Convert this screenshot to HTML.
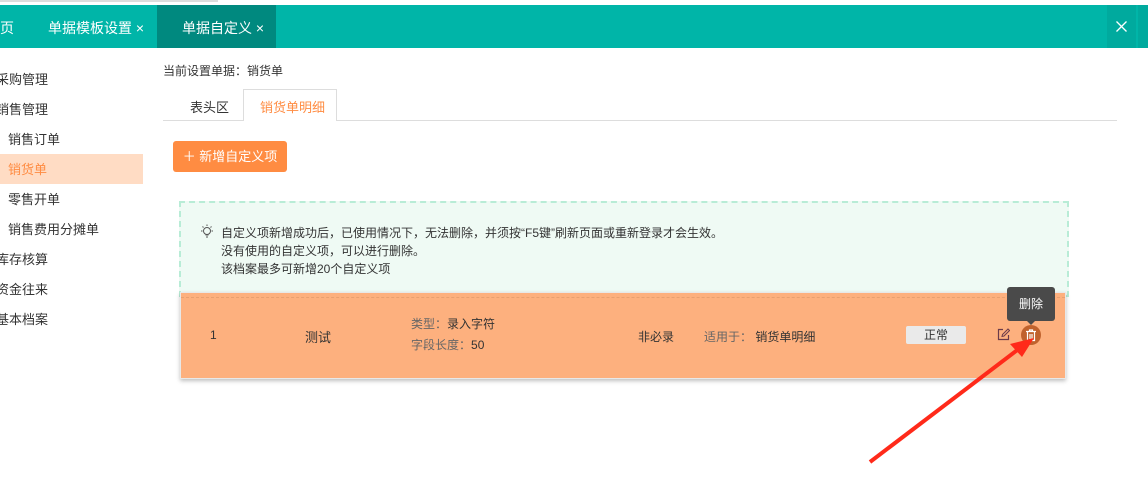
<!DOCTYPE html>
<html><head><meta charset="utf-8"><style>
*{margin:0;padding:0;box-sizing:border-box}
body{width:1148px;height:493px;background:#fff;position:relative;overflow:hidden;font-family:"Liberation Sans","Noto Sans CJK SC",sans-serif;font-size:12px;color:#333}
.a{position:absolute;white-space:nowrap}
</style></head><body>
<div class="a" style="left:0;top:0;width:218px;height:2px;background:#ddd"></div>
<div class="a" style="left:0;top:5px;width:1148px;height:43px;background:#00b5a8"></div>
<div class="a" style="left:157px;top:5px;width:119px;height:43px;background:#00897f"></div>
<div class="a" style="left:1107px;top:5px;width:29px;height:43px;background:#00aa9e"></div>
<div class="a" style="left:1138px;top:5px;width:10px;height:43px;background:#00aa9e"></div>
<div class="a" style="left:0;top:18px;color:#fff;font-size:14px">页</div>
<div class="a" style="left:48px;top:18px;color:#fff;font-size:14px">单据模板设置 ×</div>
<div class="a" style="left:182px;top:18px;color:#fff;font-size:14px">单据自定义 ×</div>
<svg class="a" style="left:1116px;top:21px" width="11" height="11"><path d="M0.5 0.5L10.5 10.5M10.5 0.5L0.5 10.5" stroke="#fff" stroke-width="1.3"/></svg>
<div class="a" style="left:0;top:154px;width:143px;height:30px;background:#ffdcc4"></div>
<div class="a" style="left:-4px;top:69px;font-size:13px">采购管理</div>
<div class="a" style="left:-4px;top:99px;font-size:13px">销售管理</div>
<div class="a" style="left:8px;top:129px;font-size:13px">销售订单</div>
<div class="a" style="left:8px;top:159px;font-size:13px;color:#ff8c42">销货单</div>
<div class="a" style="left:8px;top:189px;font-size:13px">零售开单</div>
<div class="a" style="left:8px;top:219px;font-size:13px">销售费用分摊单</div>
<div class="a" style="left:-4px;top:249px;font-size:13px">库存核算</div>
<div class="a" style="left:-4px;top:279px;font-size:13px">资金往来</div>
<div class="a" style="left:-4px;top:309px;font-size:13px">基本档案</div>
<div class="a" style="left:163px;top:62px">当前设置单据：销货单</div>
<div class="a" style="left:163px;top:120px;width:954px;height:1px;background:#ddd"></div>
<div class="a" style="left:243px;top:89px;width:94px;height:32px;border:1px solid #ddd;border-bottom:none;background:#fff"></div>
<div class="a" style="left:190px;top:97px;font-size:13px">表头区</div>
<div class="a" style="left:260px;top:97px;font-size:13px;color:#ff8c42">销货单明细</div>
<div class="a" style="left:173px;top:141px;width:114px;height:31px;background:#ff8c42;border-radius:3px;color:#fff;font-size:13px;line-height:31px;text-align:center">＋ 新增自定义项</div>
<div class="a" style="left:179px;top:201px;width:890px;height:96px;border:2px dashed #b8ecd6;background:#effaf4"></div>
<svg class="a" style="left:200px;top:224px" width="14" height="16"><circle cx="7" cy="7" r="3.5" fill="none" stroke="#555" stroke-width="1"/><path d="M5.5 11h3M6 13h2M7 0.5v1.5M1 7h1.5M11.5 7H13M2.5 2.5l1 1M11.5 2.5l-1 1" stroke="#555" stroke-width="1"/></svg>
<div class="a" style="left:221px;top:224px;line-height:18px;color:#333">自定义项新增成功后，已使用情况下，无法删除，并须按“F5键”刷新页面或重新登录才会生效。<br>没有使用的自定义项，可以进行删除。<br>该档案最多可新增20个自定义项</div>
<div class="a" style="left:180px;top:292px;width:886px;height:87px;background:#fdb07e;box-shadow:0 2px 4px rgba(0,0,0,.25);border:1px solid #e8e8e8"></div>
<div class="a" style="left:181px;top:297px;width:884px;border-top:1px dashed #e8a070"></div>
<div class="a" style="left:210px;top:328px">1</div>
<div class="a" style="left:305px;top:327px;font-size:13px">测试</div>
<div class="a" style="left:411px;top:314px;line-height:21px"><span style="color:#666">类型：</span>录入字符<br><span style="color:#666">字段长度：</span>50</div>
<div class="a" style="left:638px;top:328px">非必录</div>
<div class="a" style="left:704px;top:328px"><span style="color:#666">适用于：</span> 销货单明细</div>
<div class="a" style="left:906px;top:326px;width:60px;height:18px;background:#eaeaea;border-radius:2px;text-align:center;line-height:18px">正常</div>
<svg class="a" style="left:997px;top:328px" width="13" height="13"><path d="M6 1.5H1.5v10h10V7" fill="none" stroke="#6b3b4a" stroke-width="1.2"/><path d="M5 8.5l0.5-2L11 1l1.5 1.5L7 8z" fill="none" stroke="#6b3b4a" stroke-width="1"/></svg>
<div class="a" style="left:1021px;top:325px;width:20px;height:20px;border-radius:50%;background:#c0622d"></div>
<svg class="a" style="left:1025px;top:328px" width="12" height="14"><path d="M1 3.5h10M4.5 3.5V2h3v1.5M2.5 3.5V12.5h7V3.5M5 6v5M7 6v5" fill="none" stroke="#fff" stroke-width="1.2"/></svg>
<div class="a" style="left:1007px;top:287px;width:48px;height:34px;background:#4a4a4a;border-radius:3px;color:#fff;text-align:center;line-height:34px">删除</div>
<div class="a" style="left:1026px;top:320px;border:5px solid transparent;border-top-color:#4a4a4a;border-bottom:none"></div>
<svg class="a" style="left:0;top:0" width="1148" height="493"><line x1="870" y1="462" x2="1020" y2="348" stroke="#ff2a1a" stroke-width="4"/><polygon points="1034,338 1010,344 1022,357" fill="#ff2a1a"/></svg>
</body></html>
